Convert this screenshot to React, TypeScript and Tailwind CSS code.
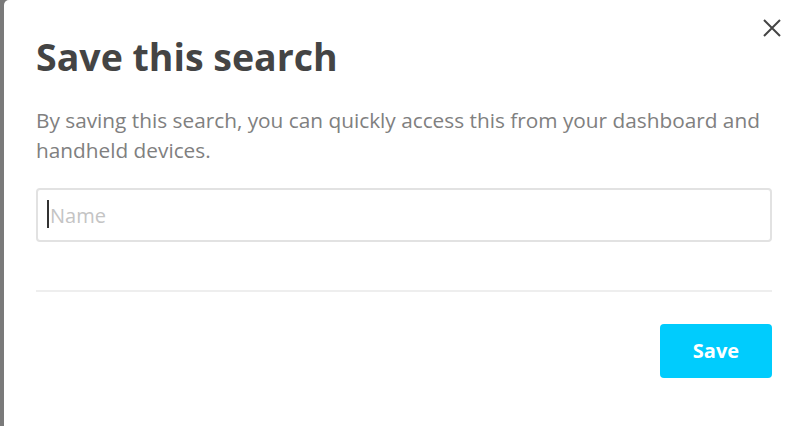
import { useState } from "react";

export default function App() {
  const [name, setName] = useState("");

  return (
    <div
      className="flex h-[426px] w-[804px] overflow-hidden bg-[#7a7a7a]"
      style={{ fontFamily: '"Open Sans", sans-serif' }}
    >
      <div className="relative ml-[4px] flex-1 rounded-tl-[5px] bg-white pl-[32px] pr-[32px] pt-[35px]">
        <button className="absolute right-[22px] top-[18px] text-[#444]" aria-label="Close">
          <svg width="20" height="20" viewBox="0 0 20 20" fill="none" stroke="currentColor" strokeWidth="2">
            <path d="M2 2 L18 18 M18 2 L2 18" />
          </svg>
        </button>

        <h2 className="text-[37.5px] font-bold leading-[44px] text-[#444]">Save this search</h2>

        <p className="mt-[26px] text-[20.8px] leading-[30px] text-[#808080]">
          By saving this search, you can quickly access this from your dashboard and handheld devices.
        </p>

        <div className="relative mt-[23px]">
          <input
            value={name}
            onChange={(e) => setName(e.target.value)}
            placeholder="Name"
            className="h-[54px] w-full rounded-[4px] border-2 border-[#e2e2e2] px-[12px] text-[20px] text-[#444] outline-none placeholder:text-[#c4c4c4]"
          />
          {name === "" && <span className="absolute left-[11px] top-[12px] h-[28px] w-[2px] bg-[#333]" />}
        </div>

        <div className="mt-[48px] h-[2px] bg-[#eeeeee]" />

        <div className="mt-[32px] flex justify-end">
          <button className="h-[54px] w-[112px] rounded-[4px] bg-[#00ccfd] text-[20px] font-bold text-white">
            Save
          </button>
        </div>
      </div>
    </div>
  );
}
